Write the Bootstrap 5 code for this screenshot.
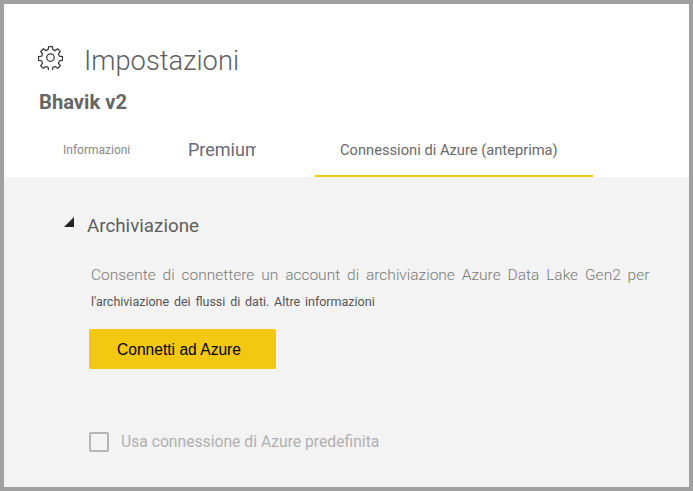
<!DOCTYPE html>
<html lang="it">
<head>
<meta charset="utf-8">
<title>Impostazioni</title>
<link href="https://cdn.jsdelivr.net/npm/bootstrap@5.3.0/dist/css/bootstrap.min.css" rel="stylesheet">
<style>
html,body{height:100%;margin:0;overflow:hidden}
body{font-family:"Liberation Sans",Arial,sans-serif;background:#f3f3f3}
.frame{width:693px;height:491px;border:4px solid #a0a0a0;display:flex;flex-direction:column;background:#f3f3f3;overflow:hidden}
.head-area{background:#fff;padding:38px 0 0 35px;height:173px;flex:none}
.title-row{height:36px}
.gear{width:25px;height:25px;flex:none;margin:-6px 21px 0 -1px}
.page-title{font-family:Roboto,sans-serif;font-weight:300;font-size:27.3px;line-height:36px;margin:2px 0 0;color:#5f5f5f}
.ws-name{font-family:Roboto,sans-serif;font-weight:700;font-size:20.2px;line-height:24px;margin:12px 0 0;color:#666}
.tab-row{margin-top:15px;height:48px;margin-left:-35px}
.tab-item{display:block;color:#6a6a6a;text-decoration:none;height:48px;line-height:42px;font-family:Roboto,sans-serif;white-space:nowrap}
.tab-info{margin-left:59px;width:125px;font-size:12px;color:#888}
.tab-prem{width:68px;overflow:hidden;font-size:18px;color:#69697a}
.tab-conn{margin-left:59px;width:278px;font-size:14.7px;padding-left:25px;border-bottom:2px solid #f2c811}
.body-area{padding:37px 0 0 60px;flex:1}
.sec-title{font-family:Roboto,sans-serif;font-weight:400;font-size:18.8px;line-height:24px;color:#5f5f5f;margin:0}
.tri{width:10px;height:10px;flex:none;margin:-8px 13px 0 0}
.desc{margin:25px 0 0 27px;width:565px;font-family:Roboto,sans-serif}
.desc-a{font-size:15.5px;line-height:24px;color:#7a7a7a;word-spacing:3.1px;white-space:nowrap;font-weight:300}
.desc-b{font-size:12.5px;line-height:20px;margin-top:5px;color:#555;word-spacing:1.7px;white-space:nowrap}
.btn-azure{display:block;margin:17px 0 0 25px;width:187px;height:40px;background:#f2c811;border:0;border-radius:2px;color:#000;font-size:15.6px;line-height:42px;padding:0 0 0 28px;text-align:left;font-family:"Liberation Sans",sans-serif}
.btn-azure:hover{background:#f2c811;color:#000}
.chk-row{margin:61px 0 0 25px}
.chk-box{appearance:none;width:20px;height:20px;border:2px solid #b5b5b5;border-radius:2px;background:transparent;margin:0 12px 0 0;flex:none}
.chk-label{font-size:15.7px;color:#b0b0b0;font-family:Roboto,sans-serif;font-weight:400}
</style>
</head>
<body>
<div class="frame">
  <header class="head-area">
    <div class="title-row d-flex align-items-center">
      <svg class="gear" viewBox="0 0 24 24" fill="none" stroke="#3a3a3a" stroke-width="1.2" stroke-linejoin="round"><circle cx="12" cy="12" r="3.6"/><path d="M10.2 1.5h3.6l.5 3 2.1.9 2.5-1.8 2.5 2.5-1.8 2.5.9 2.1 3 .5v3.6l-3 .5-.9 2.1 1.8 2.5-2.5 2.5-2.5-1.8-2.1.9-.5 3h-3.6l-.5-3-2.1-.9-2.5 1.8-2.5-2.5 1.8-2.5-.9-2.1-3-.5v-3.6l3-.5.9-2.1-1.8-2.5 2.5-2.5 2.5 1.8 2.1-.9z"/></svg>
      <h1 class="page-title">Impostazioni</h1>
    </div>
    <p class="ws-name">Bhavik v2</p>
    <nav class="tab-row d-flex">
      <a class="tab-item tab-info" href="#">Informazioni</a>
      <a class="tab-item tab-prem" href="#">Premium</a>
      <a class="tab-item tab-conn" href="#">Connessioni di Azure (anteprima)</a>
    </nav>
  </header>
  <main class="body-area">
    <div class="d-flex align-items-center">
      <svg class="tri" viewBox="0 0 10 10"><path d="M10 0V10H0z" fill="#222"/></svg>
      <h2 class="sec-title">Archiviazione</h2>
    </div>
    <div class="desc">
      <div class="desc-a">Consente di connettere un account di archiviazione Azure Data Lake Gen2 per</div>
      <div class="desc-b">l'archiviazione dei flussi di dati. Altre informazioni</div>
    </div>
    <button class="btn btn-azure" type="button">Connetti ad Azure</button>
    <div class="chk-row d-flex align-items-center">
      <input class="chk-box" type="checkbox" id="c1">
      <label class="chk-label" for="c1">Usa connessione di Azure predefinita</label>
    </div>
  </main>
</div>
<script src="https://cdn.jsdelivr.net/npm/bootstrap@5.3.0/dist/js/bootstrap.bundle.min.js"></script>
</body>
</html>
